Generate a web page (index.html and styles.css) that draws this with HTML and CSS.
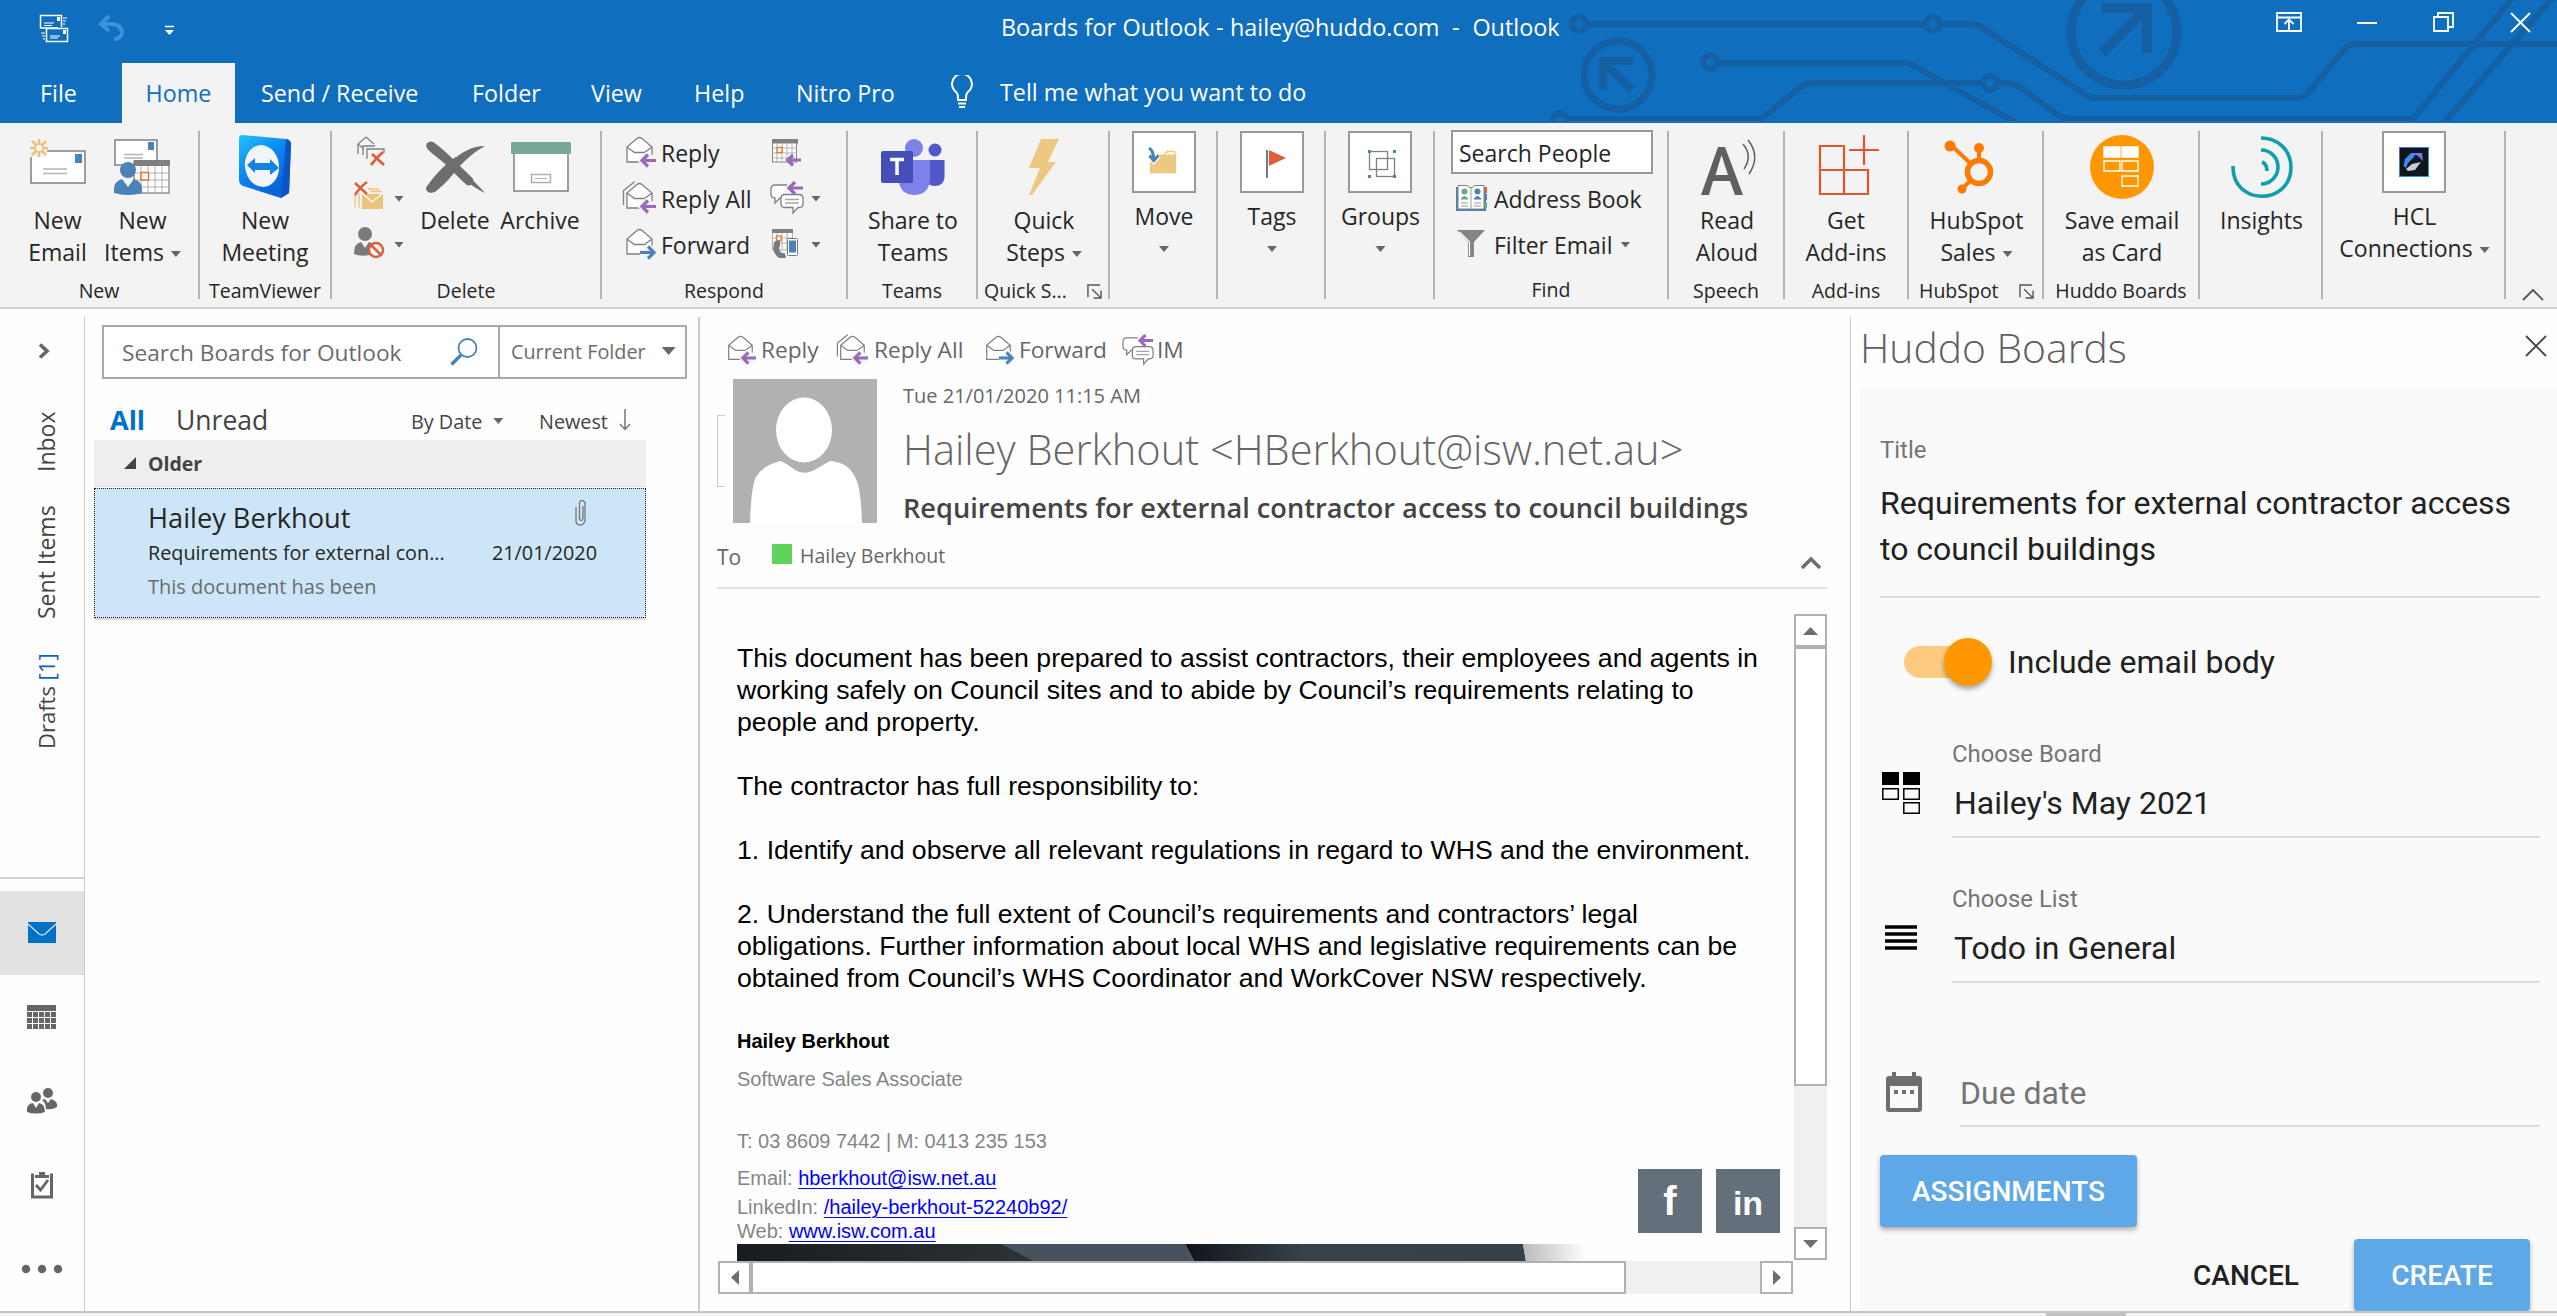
FILE: index.html
```html
<!DOCTYPE html>
<html lang="en">
<head>
<meta charset="utf-8">
<title>Boards for Outlook - hailey@huddo.com - Outlook</title>
<link rel="stylesheet" href="styles.css">
</head>
<body>
<svg class="defs" aria-hidden="true">
  <symbol id="env" viewBox="0 0 36 34"><path d="M6 12 L16 3.500 Q18.500 1.500 21 3.500 L31 12 V27 H6 Z" fill="#fff"/><path d="M20 27 H6 V12 L16 3.500 Q18.500 1.500 21 3.500 L31 12 V20 M6 12 L13.500 17.500 H23.500 L31 12" fill="none" stroke="#808080" stroke-width="1.300"/></symbol>
  <symbol id="reply" viewBox="0 0 36 34"><use href="#env" width="36" height="34"/><path d="M35 25.500 H21 M27 19.500 L21 25.500 L27 31.500" fill="none" stroke="#f3f3f3" stroke-width="7"/><path d="M35 25.500 H21 M27 19.500 L21 25.500 L27 31.500" fill="none" stroke="#9b69b9" stroke-width="3.200"/></symbol>
  <symbol id="replyall" viewBox="0 0 36 34"><use href="#reply" width="36" height="34"/><path d="M2.500 24 V9.500 L13.500 .8" fill="none" stroke="#808080" stroke-width="1.300"/></symbol>
  <symbol id="forward" viewBox="0 0 36 34"><use href="#env" width="36" height="34"/><path d="M19 25.500 H33 M27 19.500 L33 25.500 L27 31.500" fill="none" stroke="#f3f3f3" stroke-width="7"/><path d="M19 25.500 H33 M27 19.500 L33 25.500 L27 31.500" fill="none" stroke="#4a82ba" stroke-width="3.200"/></symbol>
  <symbol id="im" viewBox="0 0 36 34"><path d="M18 4 H6 Q2 4 2 8 V13 Q2 17 6 17 V22 L11 17 H12" fill="#fff" stroke="#808080" stroke-width="1.300"/><path d="M16 13.500 H30 Q34 13.500 34 17.500 V22.500 Q34 26.500 30 26.500 H29 L24 32 V26.500 H16 Q12 26.500 12 22.500 V17.500 Q12 13.500 16 13.500 Z" fill="#fff" stroke="#808080" stroke-width="1.300"/><path d="M16 18.500 H30 M16 22 H30" stroke="#a6a6a6" stroke-width="1.300"/><path d="M34 7 H20 M26 1 L20 7 L26 13" fill="none" stroke="#9b69b9" stroke-width="3.200"/></symbol>
  <symbol id="launch" viewBox="0 0 16 16"><path d="M1 14 V1 H14 M15 7 V15 H7 M5.500 5.500 L14 14" fill="none" stroke="#555" stroke-width="1.500"/></symbol>
</svg>

<header class="top">
  <svg class="circuit" viewBox="0 0 1057 121" width="1057" height="121" fill="none" stroke="#155fa3" stroke-width="6">
    <circle cx="79" cy="24" r="7"/><path d="M88 24 H424 M442 24 H470 Q479 24 484 29 L582 92 Q588 98 598 98 H796 Q806 98 809 92 L843 51 Q847 44 858 44 H1057"/>
    <circle cx="433" cy="24" r="7"/><circle cx="210" cy="62" r="7"/><path d="M219 63 H402 Q411 63 416 67 L515 122"/>
    <circle cx="60" cy="120" r="7"/><path d="M68 119 H255 Q262 119 266 115 L298 89 Q304 83 316 83 H481 M499 83 H506 Q515 83 521 88 L557 114 Q562 119 570 119 H908 Q914 119 917 114 L1013 -3"/>
    <circle cx="490" cy="83" r="7"/><path d="M944 123 L1054 -4"/>
    <circle cx="118" cy="75" r="34" stroke-width="7"/><path d="M103 90 V61 H133 M104 62 L132 90" stroke-width="8"/>
    <circle cx="624" cy="32" r="53" stroke-width="9"/><path d="M602 8 H647 V53 M646 9 L602 53" stroke-width="10"/>
  </svg>
  <div class="titlebar">
    <svg class="qat" width="190" height="56" fill="none" stroke="#fff">
      <path d="M58 28 H40.500 V15.500 H61.500 V27" stroke-width="1.500"/><rect x="46.500" y="28.500" width="21" height="13" stroke-width="1.500"/><path d="M57 17 h3 v4 h-3z M63 30 h3 v4 h-3z" fill="#fff" stroke="none"/><path d="M44 23 h10 M44 25.500 h8 M50 36 h10 M50 38 h8 M63 18 h4 M63 21 h3 M63 24 h2 M41 33 h4 M42 36 h3 M43 39 h2" stroke-width="1.200"/>
      <path d="M109 16 L101 24 L109 31 M101 24 H112 Q122 25 122 33 Q121 39 114 39" stroke="#3b92d9" stroke-width="4"/>
      <path d="M165 26.500 h9" stroke-width="1.500"/><path d="M165 30 h9 l-4.500 5z" fill="#fff" stroke="none"/>
    </svg>
    <div class="caption">Boards for Outlook - hailey@huddo.com&nbsp; -&nbsp; Outlook</div>
    <svg class="winctl" width="281" height="56" fill="none" stroke="#fff" stroke-width="2">
      <path d="M1 13 H25 V31 H1 Z M1 17.500 H25 M13 30 V20 M8.500 24 L13 19.500 L17.500 24" stroke-width="1.800"/>
      <path d="M81 23 H101"/><path d="M158 17 h14 v14 h-14z M162 16 V13 H177 V27 H173" stroke-width="1.800"/><path d="M235 13 L254 32 M254 13 L235 32" stroke-width="1.800"/>
    </svg>
  </div>
  <nav class="tabs">
    <span class="t-file">File</span><span class="t-home">Home</span><span class="t-send">Send / Receive</span><span class="t-folder">Folder</span><span class="t-view">View</span><span class="t-help">Help</span><span class="t-nitro">Nitro Pro</span>
    <svg class="bulb" width="24" height="36" fill="none" stroke="#fff" stroke-width="2"><path d="M8 25 V22 Q8 18 4.500 15.500 A10 10 0 1 1 19.500 15.500 Q16 18 16 22 V25 Z M8 28.500 H16 M9 32 H15"/></svg>
    <span class="t-tell">Tell me what you want to do</span>
  </nav>
</header>

<section class="ribbon">
  <div class="group g-new"><div class="gbody">
    <div class="big"><svg width="85" height="73"><rect x="16" y="20" width="54" height="32" fill="#fff" stroke="#808080" stroke-width="1.500"/><rect x="12" y="7" width="20" height="19" fill="#f3f3f3"/><rect x="60" y="23" width="7" height="9" fill="#4a82ba"/><path d="M28 38 H52 M28 42.500 H52" stroke="#b5b5b5" stroke-width="1.300"/><path d="M24 8 V13 M24 21 V26 M15 17 H20 M28 17 H33 M17 10 L21 14 M27 20 L31 24 M31 10 L27 14 M21 20 L17 24" stroke="#ecc37c" stroke-width="2.600"/><circle cx="24" cy="17" r="4" fill="#fff" stroke="#ecc37c" stroke-width="2"/></svg><span>New</span><span>Email</span></div>
    <div class="big"><svg width="85" height="73"><rect x="15" y="9" width="42" height="25" fill="#fff" stroke="#808080" stroke-width="1.500"/><rect x="48" y="11" width="6" height="8" fill="#4a82ba"/><path d="M24 23.500 H43 M24 27 H43" stroke="#b5b5b5" stroke-width="1.300"/><rect x="34" y="30" width="35" height="32" fill="#fff" stroke="#808080" stroke-width="1.300"/><rect x="34" y="29" width="36" height="6" fill="#808080"/><path d="M41 35 V62 M48 35 V62 M55 35 V62 M62 35 V62 M34 42 H69 M34 49 H69 M34 56 H69" stroke="#b0b0b0"/><rect x="41" y="41.500" width="7.500" height="7.500" fill="#fff" stroke="#e07b28" stroke-width="1.500"/><path d="M14 62 Q13 50 22 48 L28 56 L34 48 Q43 50 42 62 Q28 66 14 62Z M36 39 a8 8 0 1 1 -16 0 a8 8 0 1 1 16 0" fill="#4a82ba"/></svg><span>New</span><span>Items <i class="dd"></i></span></div>
  </div><div class="glabel l-new">New</div></div><i class="sep"></i>

  <div class="group g-tv"><div class="gbody">
    <div class="big"><svg width="128" height="73"><defs><linearGradient id="tv" x1="0" y1="0" x2=".6" y2="1"><stop offset="0" stop-color="#22c3fb"/><stop offset=".5" stop-color="#0b87f2"/><stop offset="1" stop-color="#0760d6"/></linearGradient></defs><path d="M41 4 L85 8 Q90 9 90 13 L88 62 L80 67 L42 55 Q38 53 38 49 V8 Q38 4 41 4Z" fill="url(#tv)"/><path d="M85 8 Q90 9 90 13 L88 62 L80 67 Z" fill="#0a55c4"/><ellipse cx="61" cy="35" rx="17" ry="21" transform="rotate(-8 61 35)" fill="#f1f4f8"/><path d="M46 34 L54 27 V32 H69 V28 L78 37 L69 44 V39 H54 V42 Z" fill="#1284e0"/></svg><span>New</span><span>Meeting</span></div>
  </div><div class="glabel">TeamViewer</div></div><i class="sep"></i>

  <div class="group g-del"><div class="gbody">
    <div class="stack">
      <div class="srow"><svg width="46" height="46" fill="none" stroke="#808080" stroke-width="1.300"><path d="M12 23 V13 L20 6 L28 13 M12 13 L18 18 M17 24 V15 H29 M21 28 V18 H38 V22"/><path d="M26 23 L38 34 M37 21 Q30 27 25 34" stroke="#dc5f3c" stroke-width="2.800"/></svg></div>
      <div class="srow"><svg width="46" height="46"><path d="M16 17 H37 V32 H16Z" fill="#ecc37c"/><path d="M17 17 L26 25 L36 17" fill="none" stroke="#fff" stroke-width="1.300"/><path d="M9 18 V30 M13 16 V31 M22 12 H33 M24 14.500 H36" stroke="#ecc37c" stroke-width="1.400"/><path d="M9 6 L21 17 M21 5 Q14 10 9 18" fill="none" stroke="#dc5f3c" stroke-width="2.600"/></svg><i class="dd"></i></div>
      <div class="srow"><svg width="46" height="46"><circle cx="19" cy="11" r="7" fill="#7a7a7a"/><path d="M8 31 Q8 20 15 19 L19 25 L23 19 Q28 20 28 24 L24 32 Q14 34 8 31Z" fill="#7a7a7a"/><circle cx="30" cy="27" r="7" fill="#fff" stroke="#dc5f3c" stroke-width="2.600"/><path d="M25 22 L35 32" stroke="#dc5f3c" stroke-width="2.600"/></svg><i class="dd"></i></div>
    </div>
    <div class="big w86"><svg width="86" height="73"><path d="M17 12 C28 18 34 24 45 34 C55 43 66 54 73 62 C62 57 54 50 43 40 C32 30 22 26 15 17 C14 12 15 11 17 12Z M73 15 C60 22 50 32 42 42 C34 52 28 57 23 61 C18 63 14 61 14 57 C22 47 30 38 40 30 C50 21 60 15 73 15Z" fill="#6e6e6e"/><path d="M19 15 C32 24 42 36 57 50" fill="none" stroke="#6e6e6e" stroke-width="9" stroke-linecap="round"/><path d="M18 57 C27 44 34 38 44 30" fill="none" stroke="#6e6e6e" stroke-width="7" stroke-linecap="round"/></svg><span>Delete</span></div>
    <div class="big w84"><svg width="84" height="73"><rect x="16" y="21" width="54" height="39" fill="#fff" stroke="#808080" stroke-width="1.500"/><rect x="13" y="11" width="60" height="12" rx="1" fill="#78a997"/><rect x="33.500" y="43.500" width="19" height="8" fill="none" stroke="#b0b0b0" stroke-width="1.500"/><path d="M37 47.500 H49" stroke="#b0b0b0"/></svg><span>Archive</span></div>
  </div><div class="glabel l-del">Delete</div></div><i class="sep"></i>

  <div class="group g-resp"><div class="gbody">
    <div class="stack s1">
      <div class="srow"><svg class="ic" width="36" height="34"><use href="#reply"/></svg><span>Reply</span></div>
      <div class="srow"><svg class="ic" width="36" height="34"><use href="#replyall"/></svg><span>Reply All</span></div>
      <div class="srow"><svg class="ic" width="36" height="34"><use href="#forward"/></svg><span>Forward</span></div>
    </div>
    <div class="stack s2">
      <div class="srow"><svg width="40" height="46"><rect x="5.500" y="9" width="24" height="22" fill="#fff" stroke="#808080"/><rect x="5" y="8" width="26" height="4.500" fill="#808080"/><path d="M10 12 V31 M15 12 V31 M20 12 V31 M25 12 V31 M5 17 H30 M5 22 H30 M5 27 H30" stroke="#b0b0b0"/><rect x="10" y="16.500" width="5" height="5" fill="#fff" stroke="#e07b28" stroke-width="1.300"/><path d="M34 29 H20 M26 24 L20.500 29 L26 34.500" fill="none" stroke="#9b69b9" stroke-width="3.200"/></svg></div>
      <div class="srow"><svg class="im" width="36" height="34"><use href="#im"/></svg><i class="dd"></i></div>
      <div class="srow"><svg width="40" height="46"><rect x="5.500" y="7" width="20" height="20" fill="#fff" stroke="#b0b0b0"/><rect x="5" y="6" width="21" height="4" fill="#808080"/><path d="M10 10 V27 M15 10 V27 M20 10 V27 M5 15 H25 M5 20 H25" stroke="#b0b0b0"/><rect x="9.500" y="13" width="4.500" height="4.500" fill="#fff" stroke="#e07b28" stroke-width="1.300"/><rect x="20.500" y="15.500" width="10" height="17" rx="1" fill="#fff" stroke="#777"/><rect x="22" y="17.500" width="7" height="12" fill="#4a82ba"/><path d="M8 18 Q3 28 12 35 L19 35 L18 30.500 L14 29.500 Q11 26 13 23 L13 18Z" fill="#7a7a7a"/></svg><i class="dd"></i></div>
    </div>
  </div><div class="glabel l-resp">Respond</div></div><i class="sep"></i>

  <div class="group g-teams"><div class="gbody"><div class="big"><svg width="128" height="73"><circle cx="86" cy="19" r="6.500" fill="#5059c9"/><circle cx="65" cy="17" r="9" fill="#7b83eb"/><path d="M78 29 H95.500 V47 Q94 55 86 55 Q80 55 78 51Z" fill="#5059c9"/><path d="M50 29 H81 V48 Q80 64 65 64 Q50 63 50 48Z" fill="#7b83eb"/><rect x="32" y="20" width="32" height="32" rx="2" fill="#464eb8"/><path d="M41 28.500 H55 M48 28 V44" stroke="#fff" stroke-width="3.500"/></svg><span>Share to</span><span>Teams</span></div></div><div class="glabel">Teams</div></div><i class="sep"></i>

  <div class="group g-quick"><div class="gbody"><div class="big"><svg width="130" height="73"><path d="M62 8 H80 L69 31 H77 L53 64 H50 L61 37 H50 Z" fill="#eec880"/></svg><span>Quick</span><span>Steps <i class="dd"></i></span></div></div><div class="glabel split"><span>Quick S...</span><svg width="15" height="15"><use href="#launch"/></svg></div></div><i class="sep"></i>

  <div class="group g-m"><div class="gbody"><div class="big boxed"><svg class="box" width="64" height="62" viewBox="1132 131 64 62"><path d="M1149 174 V154 H1163 L1167 150 H1176 L1177 154 V174Z" fill="#eec880"/><path d="M1165 154 L1168.500 151.500 H1175 V154Z" fill="#fff"/><path d="M1148 147 Q1153 150 1153 160 M1148.500 155 L1153 160.500 L1158 155" fill="none" stroke="#fff" stroke-width="6"/><path d="M1148 147 Q1153 150 1153 160 M1148.500 155 L1153 160.500 L1158 155" fill="none" stroke="#4a82ba" stroke-width="3.200"/></svg><span>Move</span><i class="dd"></i></div></div></div><i class="sep"></i>
  <div class="group g-m"><div class="gbody"><div class="big boxed"><svg class="box" width="64" height="62"><path d="M25 17 V45" stroke="#7a7a7a" stroke-width="2"/><path d="M27 17 L44 25 L27 33Z" fill="#dc5f3c"/></svg><span>Tags</span><i class="dd"></i></div></div></div><i class="sep"></i>
  <div class="group g-g"><div class="gbody"><div class="big boxed"><svg class="box" width="64" height="62" fill="none" stroke="#808080" stroke-width="1.300"><rect x="19.500" y="18.500" width="18" height="18"/><rect x="26.500" y="25.500" width="18" height="18"/><path d="M18 17 h3 v3 h-3z M43 17 h3 v3 h-3z M18 42 h3 v3 h-3z M43 42 h3 v3 h-3z" fill="#4a82ba" stroke="none"/></svg><span>Groups</span><i class="dd"></i></div></div></div><i class="sep"></i>

  <div class="group g-find"><div class="findbody">
    <div class="people">Search People</div>
    <div class="srow"><svg width="44" height="46"><path d="M5 10 H35 V34 H5Z" fill="#4a82ba"/><path d="M33 10 h3 v6 h-3z" fill="#dc5f3c"/><path d="M33 25 h3 v6 h-3z" fill="#6aa78f"/><path d="M33 17 h3 v6 h-3z" fill="#4a82ba"/><path d="M7 8.500 H16 L20 11 L24 8.500 H33 V32 H7Z" fill="#fff" stroke="#808080"/><path d="M20 11 V32" stroke="#999"/><circle cx="13.500" cy="14.500" r="3" fill="#6aa78f"/><circle cx="26.500" cy="14.500" r="3" fill="#4a82ba"/><path d="M10 22 q3.500 -5 7 0z" fill="#6aa78f" stroke="#6aa78f"/><path d="M23 22 q3.500 -5 7 0z" fill="#4a82ba" stroke="#4a82ba"/><path d="M10 26 H17 M10 29 H17 M23 26 H30 M23 29 H30" stroke="#999"/></svg><span>Address Book</span></div>
    <div class="srow"><svg width="44" height="46"><path d="M6 7 H34 L23 19 V34 H17 V19Z" fill="#858585"/><path d="M8.500 9 L18.500 19 V33" fill="none" stroke="#fff" stroke-width="1.200"/></svg><span>Filter Email</span><i class="dd"></i></div>
  </div><div class="glabel">Find</div></div><i class="sep"></i>

  <div class="group g-speech"><div class="gbody"><div class="big"><svg width="114" height="73" fill="none" stroke="#606060"><path d="M31 64 L48 16 H55 L73 64 H65 L60 50 H43 L39 64Z M45.500 44 H58 L51.500 24Z" fill="#606060" fill-rule="evenodd" stroke="none"/><path d="M73 13 Q83 25 74 38 M78 9 Q91 25 79 43" stroke-width="1.500"/></svg><span>Read</span><span>Aloud</span></div></div><div class="glabel">Speech</div></div><i class="sep"></i>

  <div class="group g-add"><div class="gbody"><div class="big"><svg width="122" height="73" fill="none" stroke="#e0552b" stroke-width="2.200"><path d="M35 15 H59 V63 H35Z M35 39 H83 V63 H59 M79 4 V34 M64 19 H94"/></svg><span>Get</span><span>Add-ins</span></div></div><div class="glabel">Add-ins</div></div><i class="sep"></i>

  <div class="group g-hub"><div class="gbody"><div class="big"><svg width="134" height="73" fill="none" stroke="#ff7a00"><circle cx="69" cy="41" r="11.500" stroke-width="5.500"/><path d="M69 28 V16 M61 33 L41 14 M61 49 L52 58" stroke-width="4"/><circle cx="40" cy="15" r="5.500" fill="#ff7a00" stroke="none"/><circle cx="69" cy="17" r="5" fill="#ff7a00" stroke="none"/><circle cx="52" cy="58" r="4.500" fill="#ff7a00" stroke="none"/></svg><span>HubSpot</span><span>Sales <i class="dd"></i></span></div></div><div class="glabel split hubl"><span>HubSpot</span><svg width="15" height="15"><use href="#launch"/></svg></div></div><i class="sep"></i>

  <div class="group g-huddo"><div class="gbody"><div class="big"><svg width="154" height="73" fill="none" stroke="#fff" stroke-width="1.300"><circle cx="77" cy="36" r="32" fill="#ff9800" stroke="none"/><path d="M59 16 h16 v10 h-16z M77 16 h16 v10 h-16z" fill="#fff"/><path d="M59 30 h16 v10 h-16z M77 30 h16 v10 h-16z M77 45 h16 v10 h-16z"/></svg><span>Save email</span><span>as Card</span></div></div><div class="glabel">Huddo Boards</div></div><i class="sep"></i>

  <div class="group g-ins"><div class="gbody"><div class="big"><svg width="121" height="73" fill="none" stroke="#0f9db0" stroke-width="3.600"><path d="M32 35 C31 75 89 75 90 37 C90 18 76 7 60 7 M60 19 A17 17 0 0 1 60 53 M61 31 Q66 33 66 40"/></svg><span>Insights</span></div></div></div><i class="sep"></i>

  <div class="group g-hcl"><div class="gbody"><div class="big boxed"><svg class="box" width="64" height="62"><defs><linearGradient id="hc" x1="0" y1="0" x2="1" y2="1"><stop offset="0" stop-color="#5b62e0"/><stop offset="1" stop-color="#1fa5e8"/></linearGradient></defs><rect x="15.500" y="14.500" width="29" height="29" fill="#10161c" stroke="url(#hc)"/><path d="M19.500 33 L21 26 L27 20 L33 20 L29 25 L24 30 L22 35Z" fill="#3f8af0"/><path d="M29 20 H38 L39 28 L34.500 23.500Z" fill="#6a7cf0"/><path d="M22 36 L28 31 L37 29 L31 37 L24 38Z" fill="#c6cdd6"/></svg><span>HCL</span><span>Connections <i class="dd"></i></span></div></div></div><i class="sep"></i>
  <svg class="collapse" width="24" height="14" fill="none" stroke="#555" stroke-width="1.800"><path d="M2 12 L12 2 L22 12"/></svg>
</section>

<main class="main">
  <aside class="rail">
    <div class="folders">
      <svg class="exp" width="12" height="16" fill="none" stroke="#666" stroke-width="3.600"><path d="M2 1.500 L9 8 L2 14.500"/></svg>
      <span class="vert v1">Inbox</span><span class="vert v2">Sent Items</span><span class="vert v3">Drafts <b>[1]</b></span>
    </div>
    <div class="modules">
      <div class="mod on"><svg width="28" height="22"><rect width="28" height="21" fill="#0072c6"/><path d="M0 2 L11 12 Q14 14 17 12 L28 2" fill="none" stroke="#cfe0ef" stroke-width="1.400"/></svg></div>
      <div class="mod"><svg width="30" height="24" fill="#666"><path d="M0 0 h29 v6 h-29z M0 7 h5 v5 h-5z M6 7 h5 v5 h-5z M12 7 h5 v5 h-5z M18 7 h5 v5 h-5z M24 7 h5 v5 h-5z M0 13 h5 v5 h-5z M6 13 h5 v5 h-5z M12 13 h5 v5 h-5z M18 13 h5 v5 h-5z M24 13 h5 v5 h-5z M0 19 h5 v5 h-5z M6 19 h5 v5 h-5z M12 19 h5 v5 h-5z M18 19 h5 v5 h-5z M24 19 h5 v5 h-5z"/></svg></div>
      <div class="mod"><svg width="30" height="26" fill="#666"><circle cx="21" cy="5" r="5"/><path d="M15 12 L18 11 L21 15 L24 11 Q31 13 30 19 Q25 22 19 21 Q19 15 15 12Z"/><circle cx="9" cy="9" r="5"/><path d="M0 24 Q-1 16 6 15 L9 20 L12 15 Q18 16 18 24 Q9 27 0 24Z"/></svg></div>
      <div class="mod"><svg width="22" height="28" fill="none" stroke="#666"><path d="M3 4 H1.500 V26 H20.500 V4 H19" stroke-width="3"/><path d="M4 7 V4 H8 V1 H14 V4 H18 V7Z" fill="#666" stroke="none"/><path d="M5 14 L9.500 19 L17 9" stroke-width="2.800"/></svg></div>
      <div class="mod"><svg width="42" height="10" fill="#666"><circle cx="5" cy="5" r="4.200"/><circle cx="21" cy="5" r="4.200"/><circle cx="37" cy="5" r="4.200"/></svg></div>
    </div>
  </aside>

  <section class="list">
    <div class="search"><span class="q">Search Boards for Outlook</span><svg class="mag" width="28" height="28" fill="none" stroke="#4a82ba"><circle cx="17.500" cy="10" r="9" stroke-width="1.800"/><path d="M11 17 L1.500 26.500" stroke-width="3.500"/></svg><span class="scope">Current Folder<i class="tri"></i></span></div>
    <div class="filter"><b>All</b><span class="unread">Unread</span><span class="by">By Date<i class="dd"></i></span><span class="newest">Newest</span><svg width="12" height="22" fill="none" stroke="#777" stroke-width="1.500"><path d="M6 0 V20 M1 15 L6 20.500 L11 15"/></svg></div>
    <div class="older"><svg width="12" height="12"><path d="M12 0 V12 H0Z" fill="#444"/></svg>Older</div>
    <div class="mail">
      <div class="m1"><span>Hailey Berkhout</span><svg width="12" height="28" fill="none" stroke="#777" stroke-width="1.300"><path d="M8 7 V20 Q6 23 4.500 20 V4 Q6 -1 10 3.500 V22 Q8 27 4 26 Q1 25 1 22 V8"/></svg></div>
      <div class="m2"><span class="msubj">Requirements for external con...</span><span>21/01/2020</span></div>
      <div class="m3">This document has been</div>
    </div>
  </section>

  <section class="reading">
    <div class="actions">
      <svg width="34" height="32"><use href="#reply"/></svg><span class="a1">Reply</span>
      <svg width="34" height="32"><use href="#replyall"/></svg><span class="a2">Reply All</span>
      <svg width="34" height="32"><use href="#forward"/></svg><span class="a3">Forward</span>
      <svg width="34" height="32"><use href="#im"/></svg><span class="a4">IM</span>
    </div>
    <div class="head">
      <i class="bracket"></i>
      <svg class="avatar" width="144" height="144"><rect width="144" height="144" fill="#b1b1b1"/><ellipse cx="71" cy="51" rx="28" ry="32.500" fill="#fff"/><path d="M17 144 Q18 108 23 98 Q30 86 48 82 Q56 86 62 91 Q72 97 83 90 Q90 86 97 82 Q115 83 122 98 Q128 108 129 144Z" fill="#fff"/></svg>
      <div class="who"><div class="when">Tue 21/01/2020 11:15 AM</div><div class="from">Hailey Berkhout &lt;HBerkhout@isw.net.au&gt;</div><div class="subj">Requirements for external contractor access to council buildings</div></div>
    </div>
    <div class="to"><span>To</span><i class="green"></i><span class="rcpt">Hailey Berkhout</span><svg width="24" height="16" fill="none" stroke="#6e6e6e" stroke-width="3.500"><path d="M3 13 L12 4 L21 13"/></svg></div>
    <div class="message">
      <article class="body">
        <p>This document has been prepared to assist contractors, their employees and agents in<br>working safely on Council sites and to abide by Council’s requirements relating to<br>people and property.</p>
        <p>The contractor has full responsibility to:</p>
        <p>1. Identify and observe all relevant regulations in regard to WHS and the environment.</p>
        <p>2. Understand the full extent of Council’s requirements and contractors’ legal<br>obligations. Further information about local WHS and legislative requirements can be<br>obtained from Council’s WHS Coordinator and WorkCover NSW respectively.</p>
        <div class="sig">
          <div class="sigtext">
            <div class="name">Hailey Berkhout</div><div class="role">Software Sales Associate</div><div class="tel">T: 03 8609 7442 | M: 0413 235 153</div>
            <div class="ln1">Email: <a href="#">hberkhout@isw.net.au</a></div><div class="ln2">LinkedIn: <a href="#">/hailey-berkhout-52240b92/</a></div><div class="ln3">Web: <a href="#">www.isw.com.au</a></div>
          </div>
          <span class="soc fb">f</span><span class="soc in">in</span>
        </div>
        <svg class="banner" width="1038" height="17"><defs><linearGradient id="b1"><stop offset="0" stop-color="#171d21"/><stop offset="1" stop-color="#2b3336"/></linearGradient><linearGradient id="b2"><stop offset="0" stop-color="#10151b"/><stop offset=".35" stop-color="#37424b"/><stop offset="1" stop-color="#36414a"/></linearGradient><linearGradient id="b3"><stop offset="0" stop-color="#bbb"/><stop offset="1" stop-color="#fff"/></linearGradient></defs><path d="M0 0 H270 L298 17 H0Z" fill="url(#b1)"/><path d="M264 0 H448 L457 17 H296Z" fill="#47525c"/><path d="M448 0 H786 L789 17 H457Z" fill="url(#b2)"/><path d="M786 0 H850 V17 H789Z" fill="url(#b3)"/></svg>
      </article>
      <div class="vsb"><i class="btn"><svg width="15" height="8"><path d="M0 8 L7.500 0 L15 8Z" fill="#6e6e6e"/></svg></i><i class="vthumb"></i><i class="btn down"><svg width="15" height="8"><path d="M0 0 H15 L7.500 8Z" fill="#6e6e6e"/></svg></i></div>
    </div>
    <div class="hsb"><i class="btn"><svg width="8" height="15"><path d="M8 0 V15 L0 7.500Z" fill="#6e6e6e"/></svg></i><i class="hthumb"></i><i class="btn right"><svg width="8" height="15"><path d="M0 0 V15 L8 7.500Z" fill="#6e6e6e"/></svg></i></div>
  </section>

  <aside class="huddo">
    <div class="hhead"><span>Huddo Boards</span><svg width="22" height="22" fill="none" stroke="#444" stroke-width="1.800"><path d="M1 1 L21 21 M21 1 L1 21"/></svg></div>
    <div class="form">
      <div class="lab t1">Title</div>
      <div class="title">Requirements for external contractor access<br>to council buildings</div>
      <div class="toggle"><span class="track"><i></i></span>Include email body</div>
      <div class="field f1"><svg width="38" height="42" fill="none" stroke="#000" stroke-width="1.500"><path d="M0 0 h17 v13 h-17z M21 0 h17 v13 h-17z" fill="#000" stroke="none"/><path d="M.8 16.800 h15.500 v10.500 h-15.500z M21.800 16.800 h15.500 v10.500 h-15.500z M21.800 30.800 h15.500 v10.500 h-15.500z"/></svg><div class="inp"><div class="lab">Choose Board</div><div class="val">Hailey's May 2021</div></div></div>
      <div class="field f2"><svg width="32" height="26"><path d="M0 2 H32 M0 9 H32 M0 16 H32 M0 23 H32" stroke="#000" stroke-width="3.600"/></svg><div class="inp"><div class="lab">Choose List</div><div class="val">Todo in General</div></div></div>
      <div class="field f3"><svg width="36" height="40"><path d="M6 0 h4 v4 h16 v-4 h4 v4 h3 q3 0 3 3 v30 q0 3 -3 3 h-30 q-3 0 -3 -3 v-30 q0 -3 3 -3 h3z M4 14 v22 h28 v-22z" fill="#6f6f6f" fill-rule="evenodd"/><path d="M8 18 h4 v4 h-4z M16 18 h4 v4 h-4z M24 18 h4 v4 h-4z" fill="#6f6f6f"/></svg><div class="inp due">Due date</div></div>
      <div class="btnp assign">ASSIGNMENTS</div>
      <div class="foot"><span class="cancel">CANCEL</span><span class="btnp create">CREATE</span></div>
    </div>
  </aside>
</main>
<footer class="status"><i></i></footer>
</body>
</html>
```
FILE: styles.css
```css
* { box-sizing: border-box; }
html, body { margin: 0; height: 1316px; overflow: hidden; }
body { width: 2557px; background: #fefefe; font: 23px/32px "Open Sans", "Noto Sans", sans-serif; color: #262626; white-space: nowrap; display: flex; flex-direction: column; }
i { font-style: normal; display: block; }
svg { display: block; flex: none; }
.defs { position: absolute; width: 0; height: 0; }
.dd { display: inline-block; width: 10px; height: 6px; background: #666; clip-path: polygon(0 0, 100% 0, 50% 100%); flex: none; }

/* title bar and tabs */
.top { position: relative; height: 123px; background: #106ebe; color: #fff; flex: none; font-size: 23.3px; }
.circuit { position: absolute; left: 1500px; top: 0; }
.titlebar { position: relative; display: flex; height: 63px; }
.caption { width: 600px; margin-left: 811px; font-size: 23.400px; word-spacing: .3px; line-height: 55px; }
.winctl { margin-left: auto; }
.tabs { position: relative; display: flex; height: 60px; line-height: 60px; }
.t-file { margin-left: 40px; width: 58px; margin-right: 24px; }
.t-home { width: 113px; background: #f3f3f3; color: #106ebe; text-align: center; }
.t-send { margin-left: 26px; width: 211px; }
.t-folder { width: 119px; }
.t-view { width: 103px; }
.t-help { width: 102px; }
.t-nitro { width: 154px; }
.bulb { margin-top: 12px; width: 24px; }
.t-tell { margin-left: 26px; line-height: 59px; }

/* ribbon */
.ribbon { display: flex; height: 186px; padding-top: 8px; background: #f3f3f3; border-bottom: 2px solid #d0d0d0; flex: none; }
.sep { width: 2px; height: 168px; background: #b3b3b3; flex: none; }
.group { flex: none; }
.gbody { display: flex; height: 140px; justify-content: center; margin-left: 1px; margin-right: -1px; }
.glabel { height: 40px; line-height: 40px; font-size: 19.5px; text-align: center; }
.big { display: flex; flex-direction: column; align-items: center; text-align: center; }
.big span { height: 32px; line-height: 32px; }
.big .dd { vertical-align: 4px; margin-left: 1px; }
.boxed .box { border: 2px solid #999; background: #fff; margin-bottom: 7px; width: 64px; height: 62px; overflow: hidden; }
.boxed > .dd { margin: 14px 0 0; }
.g-new { width: 198px; }
.g-new .gbody { justify-content: flex-start; padding-left: 14px; }
.g-tv { width: 130px; }
.g-tv .gbody { margin: 0; }
.g-del { width: 268px; }
.g-del .gbody { justify-content: flex-start; padding-left: 13px; }
.w86 { width: 86px; }
.w84 { width: 84px; }
.srow { display: flex; height: 46px; align-items: center; }
.srow span { margin-top: -2px; }
.srow .dd { margin-top: -3px; }
.g-del .stack { width: 66px; }
.g-del .srow .dd { margin-left: 2px; }
.g-resp { width: 244px; }
.g-resp .gbody { justify-content: flex-start; padding-left: 18px; }
.g-resp .ic { margin-top: -4px; }
.s1 { width: 146px; }
.s1 span { margin-left: 4px; }
.s2 svg { margin-right: 4px; }
.s2 .im { margin: -4px 6px 0 2px; }
.g-teams { width: 128px; }
.g-quick { width: 130px; }
.split { display: flex; align-items: center; padding-left: 6px; }
.split svg { margin: 0 0 0 20px; }
.g-m { width: 106px; }
.g-g { width: 107px; }
.g-find { width: 232px; }
.findbody { height: 140px; padding-left: 16px; }
.people { width: 202px; height: 44px; margin-top: -1px; margin-bottom: 4px; line-height: 42px; padding-left: 6px; border: 2px solid #999; background: #fff; }
.findbody .srow:nth-child(2) { margin-top: -1px; }
.findbody .srow span { margin-left: -1px; }
.findbody .srow .dd { margin-left: 8px; }
.g-speech { width: 114px; }
.g-add { width: 122px; }
.g-add .gbody { margin: 0; }
.g-hub { width: 133px; }
.hubl { padding-left: 10px; }
.g-huddo { width: 154px; }
.g-ins { width: 121px; }
.g-hcl { width: 181px; }
.collapse { margin: 157px 0 0 15px; }

/* workspace */
.main { display: flex; height: 1002px; flex: none; }
.rail { width: 85px; margin-top: 8px; border-right: 1px solid #ccc; color: #444; }
.folders { height: 562px; border-bottom: 2px solid #d2d2d2; padding-top: 26px; }
.exp { margin-left: 38px; }
.vert { display: block; writing-mode: vertical-rl; transform: rotate(180deg); font-size: 23px; line-height: 32px; width: 32px; margin-left: 30px; }
.vert b { color: #1563b5; font-weight: 400; }
.v1 { margin-top: 51px; height: 62px; }
.v2 { margin-top: 33px; height: 114px; }
.v3 { margin-top: 34px; height: 96px; font-size: 22px; }
.modules { padding-top: 12px; }
.mod { height: 84px; display: flex; align-items: center; justify-content: center; }
.mod.on { background: #e1e1e1; }

.list { width: 615px; margin-top: 8px; border-right: 2px solid #ccc; padding: 8px 0 0 17px; }
.search { width: 585px; height: 54px; border: 2px solid #a3abb8; background: #fff; display: flex; align-items: center; color: #6b6b6b; font-size: 22.7px; line-height: 50px; }
.q { margin: 2px 0 0 18px; width: 328px; }
.scope { margin-left: 20px; border-left: 2px solid #a3abb8; padding-left: 11px; font-size: 19.800px; display: flex; align-items: center; }
.tri { width: 14px; height: 8px; background: #666; clip-path: polygon(0 0, 100% 0, 50% 100%); margin: -2px 0 0 16px; }
.filter { display: flex; height: 61px; padding: 24px 0 0 8px; font-size: 19.800px; color: #444; line-height: 33px; }
.filter b { font-size: 27px; color: #0072c6; width: 66px; }
.unread { font-size: 26.5px; width: 235px; padding-top: 1px; }
.by { width: 128px; padding-top: 2px; }
.by .dd { margin-left: 11px; vertical-align: 5px; }
.newest { width: 80px; padding-top: 2px; }
.filter svg { margin-top: 6px; }
.older { width: 552px; height: 47px; margin-left: -8px; background: #efefef; border-bottom: 1px solid #e0e0e0; display: flex; align-items: center; font-size: 19.5px; font-weight: 700; color: #444; padding: 2px 0 0 30px; }
.older svg { margin: -2px 12px 0 0; }
.mail { width: 552px; height: 130px; margin: 1px 0 0 -8px; background: #cde6f7; border: 1px dotted #222; padding: 10px 0 0 53px; box-shadow: 0 2px 0 #d9d9d9; font-size: 19.800px; }
.m1 { display: flex; font-size: 27.2px; height: 45px; line-height: 38px; }
.m1 span { width: 427px; }
.m2 { display: flex; height: 34px; line-height: 17px; }
.msubj { width: 344px; }
.m3 { color: #6b6b6b; line-height: 18px; font-size: 20px; }

.reading { width: 1151px; margin-top: 8px; border-right: 1px solid #ccc; padding-left: 17px; color: #666; }
.actions { display: flex; align-items: center; height: 62px; padding: 3px 0 0 6px; line-height: 32px; font-size: 22.7px; }
.actions span { margin-left: 5px; }
.actions .a1 { width: 74px; margin-left: 4px; }
.actions .a2 { width: 107px; }
.actions .a3 { width: 102px; margin-left: 4px; }
.actions .a4 { margin-left: 2px; }
.head { display: flex; height: 144px; }
.bracket { width: 8px; height: 72px; border: 1px solid #ccc; border-right: 0; margin-top: 36px; }
.avatar { margin-left: 8px; }
.who { margin-left: 26px; }
.when { font-size: 20px; line-height: 33px; }
.from { font-size: 41.6px; font-weight: 300; line-height: 60px; margin-top: 7px; }
.subj { font-size: 27.2px; font-weight: 600; color: #444; line-height: 36px; margin-top: 11px; }
.to { width: 1111px; height: 66px; border-bottom: 2px solid #e3e3e3; display: flex; align-items: center; font-size: 21px; }
.to > span:first-child { width: 55px; margin-top: 4px; }
.green { width: 20px; height: 20px; background: #5fd35a; margin-top: -3px; }
.to .rcpt { margin-left: 8px; font-size: 19.5px; width: 993px; margin-top: 2px; }
.to svg { margin: 16px 0 0 6px; }
.message { display: flex; }
.body { width: 1077px; height: 672px; padding: 53px 0 0 20px; font: 26.67px/32px "Liberation Sans", Arial, sans-serif; color: #000; overflow: hidden; }
.body p { margin: 0 0 32px; }
.sig { display: flex; height: 218px; font-size: 20px; color: #858585; line-height: 30px; }
.sigtext { width: 901px; }
.name { color: #000; font-weight: 700; }
.role { margin-top: 8px; }
.tel { margin-top: 32px; }
.ln1 { margin-top: 7px; }
.ln2 { margin-top: -1px; }
.ln3 { margin-top: -6px; }
.body a { color: #00f; text-underline-offset: 3px; text-decoration-thickness: 1px; }
.soc { width: 64px; height: 64px; margin: 143px 14px 0 0; background: #636f7a; color: #fff; font-weight: 700; text-align: center; line-height: 64px; font-size: 40px; }
.soc.in { font-size: 34px; line-height: 68px; }
.vsb { width: 33px; height: 646px; margin-top: 25px; background: #f0f0f0; display: flex; flex-direction: column; }
.btn { width: 33px; height: 33px; border: 2px solid #b1b1b1; background: #fff; display: flex; align-items: center; justify-content: center; flex: none; }
.vthumb { height: 439px; border: 2px solid #b1b1b1; background: #fff; }
.down { margin-top: auto; }
.hsb { width: 1075px; height: 33px; margin-left: 1px; background: #f0f0f0; display: flex; }
.hthumb { width: 875px; border: 2px solid #b1b1b1; background: #fff; }
.right { margin-left: auto; }

/* add-in pane */
.huddo { width: 706px; height: 1002px; padding-left: 9px; font-family: Roboto, sans-serif; overflow: hidden; }
.hhead { display: flex; height: 77px; justify-content: space-between; font: 300 40.8px/76px "Open Sans", sans-serif; color: #5f5f5f; padding-right: 10px; }
.hhead svg { margin-top: 26px; }
.form { height: 925px; background: #fafafa; padding: 48px 17px 0 20px; color: #212121; font-size: 32px; }
.lab { font-size: 23.900px; line-height: 32px; color: #757575; }
.title { line-height: 46px; margin-top: 14px; height: 118px; border-bottom: 2px solid #dcdcdc; }
.toggle { display: flex; align-items: center; margin-top: 40px; height: 48px; padding-left: 24px; }
.track { width: 78px; height: 32px; border-radius: 16px; background: #fdca80; margin-right: 26px; }
.track i { width: 48px; height: 48px; border-radius: 50%; background: #ff9800; margin: -8px 0 0 40px; box-shadow: 0 3px 5px rgba(0,0,0,.35); }
.field { display: flex; }
.inp { border-bottom: 2px solid #dcdcdc; margin-left: auto; width: 588px; }
.f1 { margin-top: 52px; height: 100px; }
.f1 svg { margin: 34px 0 0 2px; }
.val { line-height: 40px; padding: 13px 0 0 2px; }
.f2 { margin-top: 45px; height: 100px; }
.f2 svg { margin: 42px 0 0 5px; }
.f3 { margin-top: 80px; height: 64px; }
.f3 svg { margin: 9px 0 0 6px; }
.due { width: 580px; color: #757575; line-height: 60px; }
.btnp { background: #5fa8e8; color: #fff; border-radius: 4px; height: 72px; line-height: 74px; font-size: 28px; font-weight: 500; text-align: center; box-shadow: 0 3px 5px rgba(0,0,0,.3); }
.assign { width: 257px; margin-top: 28px; }
.foot { display: flex; justify-content: flex-end; margin-top: 12px; padding-right: 10px; }
.cancel { font-size: 28px; font-weight: 500; line-height: 74px; margin-right: 55px; height: 72px; }
.create { width: 176px; }
.status { height: 5px; background: #f2f2f2; border-top: 2px solid #c5c5c5; flex: none; }
.status i { width: 80px; height: 3px; margin-left: 2046px; background: #c1c1c1; }
```
